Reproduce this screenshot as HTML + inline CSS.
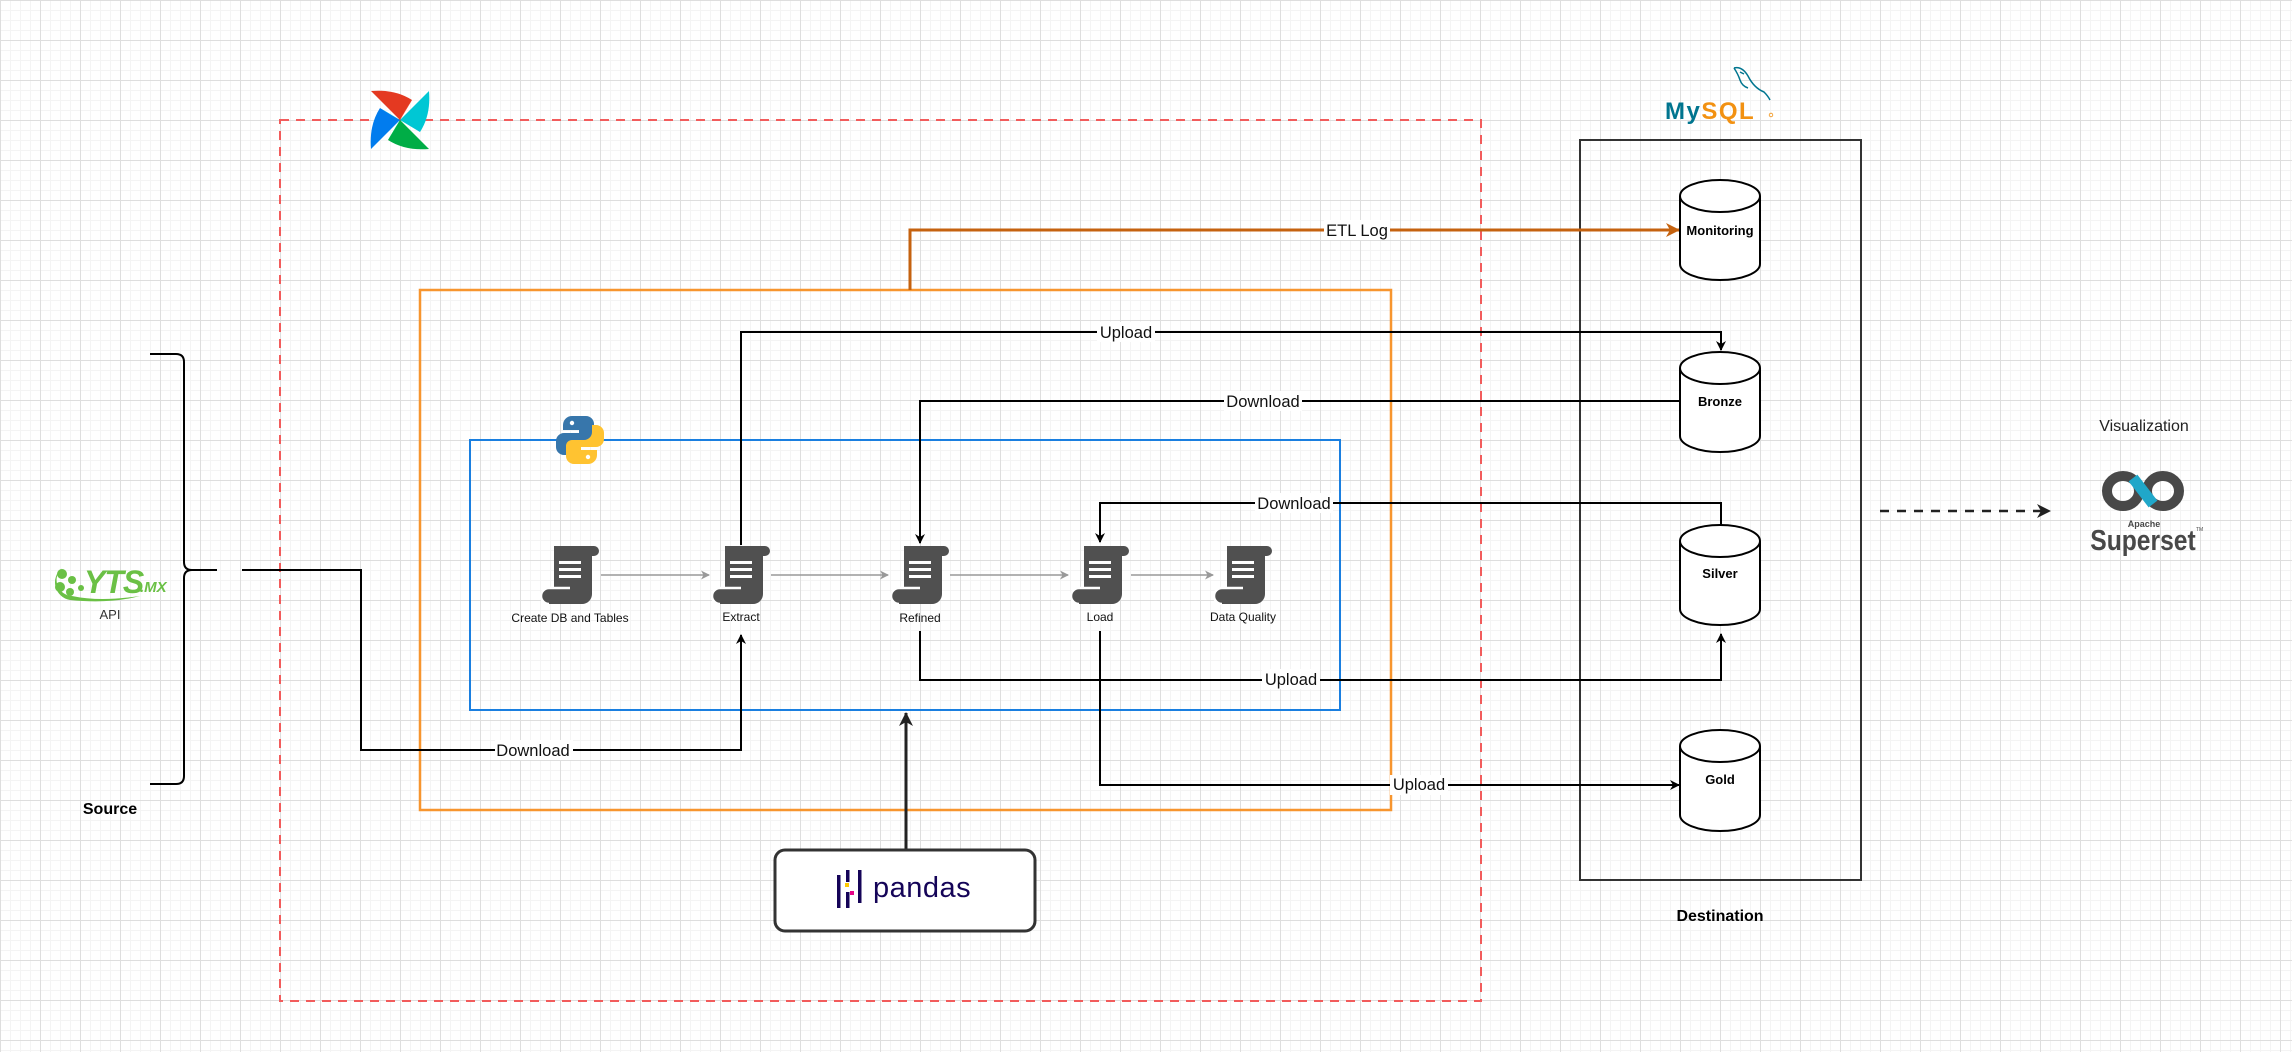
<!DOCTYPE html>
<html><head><meta charset="utf-8">
<style>
html,body{margin:0;padding:0;}
body{width:2292px;height:1052px;overflow:hidden;background-color:#fff;
background-image:
linear-gradient(to right,#dedede 1px,transparent 1px),
linear-gradient(to bottom,#dedede 1px,transparent 1px),
linear-gradient(to right,#f4f4f4 1px,transparent 1px),
linear-gradient(to bottom,#f4f4f4 1px,transparent 1px);
background-size:40px 40px,40px 40px,10px 10px,10px 10px;}
svg{position:absolute;left:0;top:0;font-family:"Liberation Sans",sans-serif;}
</style></head><body>
<svg width="2292" height="1052" viewBox="0 0 2292 1052">
<defs>
<marker id="ab" markerWidth="10" markerHeight="10" refX="9" refY="5" orient="auto" markerUnits="userSpaceOnUse"><path d="M0,0 L10,5 L0,10 L3,5 Z" fill="#000"/></marker>
<marker id="ao" markerWidth="14" markerHeight="14" refX="13" refY="7" orient="auto" markerUnits="userSpaceOnUse"><path d="M0,0 L14,7 L0,14 L4,7 Z" fill="#c5620f"/></marker>
<marker id="ag" markerWidth="9" markerHeight="9" refX="8" refY="4.5" orient="auto" markerUnits="userSpaceOnUse"><path d="M0,0 L9,4.5 L0,9 L2.5,4.5 Z" fill="#999"/></marker>
<marker id="ad" markerWidth="14" markerHeight="14" refX="13" refY="7" orient="auto" markerUnits="userSpaceOnUse"><path d="M0,0 L14,7 L0,14 L4,7 Z" fill="#222"/></marker>
<g id="scroll">
<path d="M14,2 H54 a5,5 0 0 1 5,5 a5,5 0 0 1 -5,5 H52 V50 a10,10 0 0 1 -10,10 H9 a8,8 0 0 1 0,-16 H14 Z" fill="#505050"/>
<path d="M30,44 H9 a8,8 0 0 0 0,16" fill="none" stroke="#fff" stroke-width="2.5"/>
<rect x="19" y="17" width="22" height="3" fill="#fff"/>
<rect x="19" y="24" width="22" height="3" fill="#fff"/>
<rect x="19" y="31" width="22" height="3" fill="#fff"/>
</g>
</defs>

<rect x="280" y="120" width="1201" height="881" fill="none" stroke="#f25c5c" stroke-width="2" stroke-dasharray="9,7"/>
<rect x="420" y="290" width="971" height="520" fill="none" stroke="#f7952e" stroke-width="2.5"/>
<rect x="470" y="440" width="870" height="270" fill="none" stroke="#1a7fe0" stroke-width="2"/>
<rect x="1580" y="140" width="281" height="740" fill="none" stroke="#333" stroke-width="2"/>

<path d="M150,354 H176 q8,0 8,8 V562 q0,8 8,8 h25 M192,570 q-8,0 -8,8 V776 q0,8 -8,8 H150" fill="none" stroke="#000" stroke-width="2"/>

<path d="M242,570 H361 V750 H741 V635" fill="none" stroke="#000" stroke-width="2" marker-end="url(#ab)"/>
<path d="M741,545 V332 H1721 V350" fill="none" stroke="#000" stroke-width="2" marker-end="url(#ab)"/>
<path d="M910,290 V230 H1679" fill="none" stroke="#c5620f" stroke-width="3" marker-end="url(#ao)"/>
<path d="M1679,401 H920 V543" fill="none" stroke="#000" stroke-width="2" marker-end="url(#ab)"/>
<path d="M1721,525 V503 H1100 V542" fill="none" stroke="#000" stroke-width="2" marker-end="url(#ab)"/>
<path d="M920,631 V680 H1721 V634" fill="none" stroke="#000" stroke-width="2" marker-end="url(#ab)"/>
<path d="M1100,631 V785 H1679" fill="none" stroke="#000" stroke-width="2" marker-end="url(#ab)"/>
<path d="M906,850 V713" fill="none" stroke="#222" stroke-width="3" marker-end="url(#ad)"/>
<path d="M1880,511 H2050" fill="none" stroke="#222" stroke-width="2.5" stroke-dasharray="9,8" marker-end="url(#ad)"/>

<g stroke="#999" stroke-width="1.5" fill="none">
<path d="M601,575 H709" marker-end="url(#ag)"/>
<path d="M771,575 H888" marker-end="url(#ag)"/>
<path d="M950,575 H1068" marker-end="url(#ag)"/>
<path d="M1131,575 H1213" marker-end="url(#ag)"/>
</g>

<g font-size="16.5" text-anchor="middle" fill="#111">
<rect x="495" y="740" width="78" height="20" fill="#fff"/><text x="533" y="756">Download</text>
<rect x="1097" y="322" width="58" height="20" fill="#fff"/><text x="1126" y="338">Upload</text>
<rect x="1324" y="220" width="66" height="20" fill="#fff"/><text x="1357" y="236">ETL Log</text>
<rect x="1224" y="391" width="78" height="20" fill="#fff"/><text x="1263" y="407">Download</text>
<rect x="1255" y="493" width="78" height="20" fill="#fff"/><text x="1294" y="509">Download</text>
<rect x="1262" y="669" width="58" height="20" fill="#fff"/><text x="1291" y="685">Upload</text>
<rect x="1390" y="775" width="58" height="20" fill="#fff"/><text x="1419" y="790">Upload</text>
</g>

<use href="#scroll" x="540" y="544"/>
<use href="#scroll" x="711" y="544"/>
<use href="#scroll" x="890" y="544"/>
<use href="#scroll" x="1070" y="544"/>
<use href="#scroll" x="1213" y="544"/>
<g font-size="12" text-anchor="middle" fill="#111">
<text x="570" y="622">Create DB and Tables</text>
<text x="741" y="621">Extract</text>
<text x="920" y="622">Refined</text>
<text x="1100" y="621">Load</text>
<text x="1243" y="621">Data Quality</text>
</g>

<g fill="#fff" stroke="#000" stroke-width="2">
<path d="M1680,196 V264 A40,16 0 0 0 1760,264 V196"/><ellipse cx="1720" cy="196" rx="40" ry="16"/>
<path d="M1680,368 V436 A40,16 0 0 0 1760,436 V368"/><ellipse cx="1720" cy="368" rx="40" ry="16"/>
<path d="M1680,541 V609 A40,16 0 0 0 1760,609 V541"/><ellipse cx="1720" cy="541" rx="40" ry="16"/>
<path d="M1680,746 V815 A40,16 0 0 0 1760,815 V746"/><ellipse cx="1720" cy="746" rx="40" ry="16"/>
</g>
<g font-size="13" font-weight="bold" text-anchor="middle" fill="#000">
<text x="1720" y="235">Monitoring</text>
<text x="1720" y="406">Bronze</text>
<text x="1720" y="578">Silver</text>
<text x="1720" y="784">Gold</text>
</g>

<text x="110" y="814" font-size="16" font-weight="bold" text-anchor="middle">Source</text>
<text x="1720" y="921" font-size="16" font-weight="bold" text-anchor="middle">Destination</text>
<text x="2144" y="431" font-size="16" text-anchor="middle" fill="#222">Visualization</text>

<g fill="#6ac045">
<path d="M62,568 a18,18 0 0 0 8,32 q40,4 70,-4 q-40,6 -68,0 a16,16 0 0 1 -10,-28 z"/>
<circle cx="62" cy="574" r="5"/><circle cx="60" cy="587" r="5"/><circle cx="70" cy="592" r="4"/><circle cx="72" cy="580" r="4"/><circle cx="81" cy="588" r="3"/>
<text x="84" y="593" font-size="32" font-weight="bold" font-style="italic" letter-spacing="-1">YTS</text>
<text x="140" y="592" font-size="15" font-weight="bold" font-style="italic">.MX</text>
</g>
<text x="110" y="619" font-size="13" text-anchor="middle" fill="#333">API</text>

<g transform="translate(400,120)">
<path d="M0,0 L-29,-29 Q-5,-31 12,-20 Z" fill="#e43921"/>
<path d="M0,0 L12,-20 Q4,-8 0,0 Z" fill="#ff7557"/>
<path d="M0,0 L29,-29 Q31,-5 20,12 Z" fill="#00c7d4"/>
<path d="M0,0 L29,29 Q5,31 -12,20 Z" fill="#00ad46"/>
<path d="M0,0 L-12,20 Q-4,8 0,0 Z" fill="#04d659"/>
<path d="M0,0 L-29,29 Q-31,5 -20,-12 Z" fill="#017cee"/>
<path d="M0,0 L-20,-12 Q-8,-4 0,0 Z" fill="#11e1ee"/>
</g>

<g transform="translate(556,416)">
<path d="M23,0 h-7 a9,9 0 0 0 -9,9 v5 h16 v3 H8 a8,8 0 0 0 -8,8 v6 a8,8 0 0 0 8,8 h4 v-7 a8,8 0 0 1 8,-8 h12 a6,6 0 0 0 6,-6 V8 a8,8 0 0 0 -8,-8 z" fill="#3776ab"/>
<path d="M25,48 h7 a9,9 0 0 0 9,-9 v-5 h-16 v-3 h15 a8,8 0 0 0 8,-8 v-6 a8,8 0 0 0 -8,-8 h-4 v7 a8,8 0 0 1 -8,8 h-12 a6,6 0 0 0 -6,6 v10 a8,8 0 0 0 8,8 z" fill="#ffc331"/>
<circle cx="16" cy="7" r="2.2" fill="#fff"/><circle cx="32" cy="41" r="2.2" fill="#fff"/>
</g>

<text x="1665" y="119" font-size="24" font-weight="bold" fill="#00758f" letter-spacing="1.5">My<tspan fill="#f29111">SQL</tspan></text>
<circle cx="1771" cy="115" r="1.8" fill="none" stroke="#f29111" stroke-width="0.8"/>
<path d="M1734,68 q8,-2 14,8 q6,12 16,16 q4,4 6,8 M1734,68 q4,6 6,12 q2,6 8,8 M1740,72 l4,2" fill="none" stroke="#00758f" stroke-width="1.5"/>

<rect x="775" y="850" width="260" height="81" rx="10" fill="#fff" stroke="#333" stroke-width="3"/>
<g fill="#150458">
<rect x="837" y="875" width="3.5" height="33"/>
<rect x="846" y="870" width="3.5" height="12"/><rect x="846" y="892" width="3.5" height="16"/>
<rect x="858" y="870" width="3.5" height="33"/>
</g>
<rect x="845" y="883" width="4" height="4" fill="#ffca00"/>
<rect x="850" y="891" width="4" height="4" fill="#e70488"/>
<text x="873" y="897" font-size="29" fill="#150458" letter-spacing="0.5">pandas</text>

<ellipse cx="2123" cy="491" rx="16" ry="15" fill="none" stroke="#484848" stroke-width="10"/>
<ellipse cx="2163" cy="491" rx="16" ry="15" fill="none" stroke="#484848" stroke-width="10"/>
<path d="M2133,478 L2153,504" fill="none" stroke="#20a7c9" stroke-width="11"/>
<text x="2144" y="527" font-size="9" font-weight="bold" text-anchor="middle" fill="#484848">Apache</text>
<text x="2143" y="550" font-size="29" font-weight="bold" text-anchor="middle" fill="#484848" transform="translate(2143,0) scale(0.85,1) translate(-2143,0)">Superset</text>
<text x="2196" y="531" font-size="5" fill="#484848">TM</text>
</svg>
</body></html>
